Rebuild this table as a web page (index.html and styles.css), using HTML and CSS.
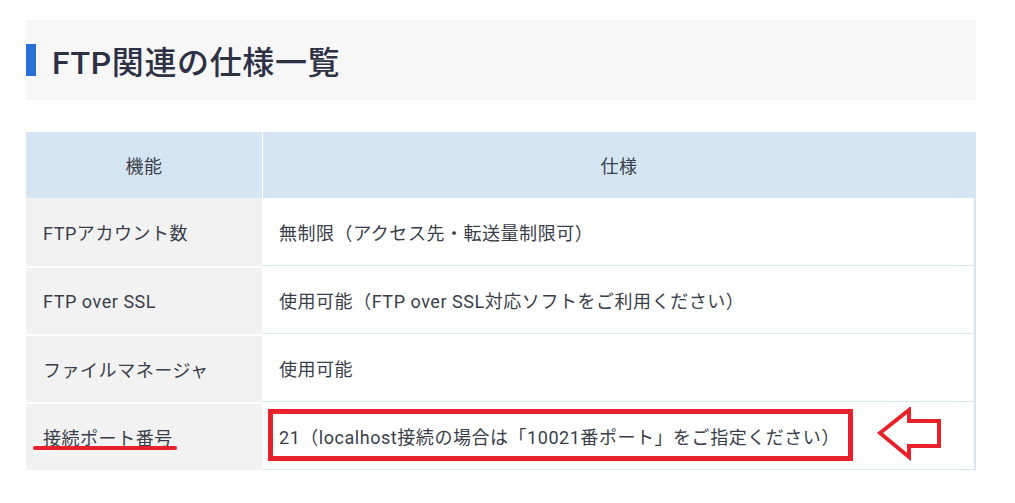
FILE: index.html
```html
<!DOCTYPE html>
<html lang="ja">
<head>
    <meta charset="UTF-8"/>
    <meta name="viewport" content="width=device-width, initial-scale=1"/>
    <title>FTP関連の仕様一覧</title>
    <link rel="stylesheet" href="styles.css">
</head>
<body>

<div class="contenido">
    <h2 class="titulo">FTP関連の仕様一覧</h2>

    <div class="tabla-wrap">
        <table class="tabla">
            <thead>
            <tr>
                <th class="col-label">機能</th>
                <th class="col-valor">仕様</th>
            </tr>
            </thead>
            <tbody>
            <tr>
                <td class="label">FTPアカウント数</td>
                <td class="valor">無制限（アクセス先・転送量制限可）</td>
            </tr>
            <tr>
                <td class="label">FTP over SSL</td>
                <td class="valor">使用可能（FTP over SSL対応ソフトをご利用ください）</td>
            </tr>
            <tr>
                <td class="label">ファイルマネージャ</td>
                <td class="valor">使用可能</td>
            </tr>
            <tr>
                <td class="label">接続ポート番号</td>
                <td class="valor">21（localhost接続の場合は「10021番ポート」をご指定ください）</td>
            </tr>
            </tbody>
        </table>

        <!-- anotaciones -->
        <span class="marca-subrayado"></span>
        <span class="marca-caja"></span>
        <svg class="marca-flecha" width="66" height="54" viewBox="0 0 66 54">
            <path d="M3 26 L32 3 L32 14 L62 14 L62 39 L32 39 L32 50 Z"
                  fill="none" stroke="#e8212b" stroke-width="4" stroke-linejoin="miter"/>
        </svg>
    </div>
</div>

</body>
</html>
```

FILE: styles.css
```css
/* RESET BASICO */
* {
    margin: 0;
    padding: 0;
    box-sizing: border-box;
}

body {
    font-family: Roboto, "Noto Sans CJK JP", sans-serif;
    background: #fff;
    color: #333;
    padding: 20px 39px 0 26px;
}

.titulo {
    background: #f7f7f7;
    height: 80px;
    display: flex;
    align-items: center;
    font-size: 32px;
    font-weight: 500;
    color: #2d3146;
    position: relative;
    padding-left: 26px;
    letter-spacing: 0.02em;
}

.titulo::before {
    content: "";
    position: absolute;
    left: 0;
    top: 24px;
    width: 10px;
    height: 32px;
    background: #2a6fd6;
}

.tabla-wrap {
    position: relative;
    margin-top: 32px;
}

.tabla {
    width: 100%;
    border-collapse: separate;
    border-spacing: 0;
    font-size: 18px;
    letter-spacing: 0.03em;
    color: #393e4a;
}

.tabla th {
    background: #d6e5f2;
    height: 66px;
    font-weight: 400;
    text-align: center;
}

.tabla th.col-label {
    width: 236px;
}

.tabla th.col-valor {
    border-left: 1px solid #fff;
    border-right: 1px solid #d6e5f2;
}

.tabla td {
    height: 68px;
    padding: 0 17px;
    text-align: left;
}

.tabla td.label {
    background: #f2f2f2;
    border-top: 2px solid #fff;
    padding-left: 17px;
}

.tabla tr:first-child td.label {
    border-top: none;
}

.tabla td.valor {
    background: #fff;
    border-left: 1px solid #fff;
    border-bottom: 1px solid #d6e5f2;
    border-right: 2px solid #d6e5f2;
    padding-left: 16px;
}

.tabla tr:first-child td.valor {
    height: 67px;
}

/* Anotaciones rojas */
.marca-subrayado {
    position: absolute;
    left: 7px;
    top: 314px;
    width: 144px;
    height: 4px;
    border-radius: 2px;
    background: #e8212b;
}

.marca-caja {
    position: absolute;
    left: 242px;
    top: 277px;
    width: 585px;
    height: 52px;
    border: 5px solid #e8212b;
}

.marca-flecha {
    position: absolute;
    left: 851px;
    top: 275px;
}
```
